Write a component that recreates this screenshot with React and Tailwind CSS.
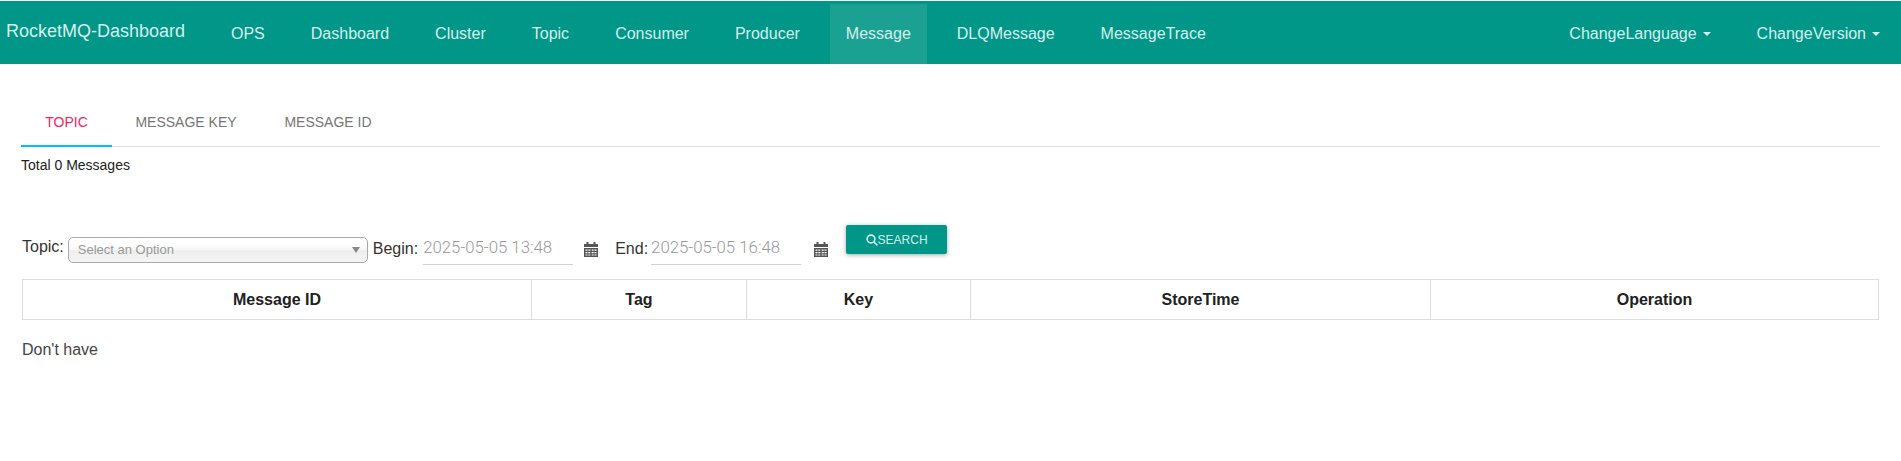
import React from 'react';

const navItems = [
  { label: 'OPS' },
  { label: 'Dashboard' },
  { label: 'Cluster' },
  { label: 'Topic' },
  { label: 'Consumer' },
  { label: 'Producer' },
  { label: 'Message', active: true },
  { label: 'DLQMessage' },
  { label: 'MessageTrace' },
];

const columns = [
  { label: 'Message ID', w: 'w-[509px]' },
  { label: 'Tag', w: 'w-[215px]' },
  { label: 'Key', w: 'w-[224px]' },
  { label: 'StoreTime', w: 'w-[460px]' },
  { label: 'Operation', w: 'flex-1' },
];

const CalendarIcon = () => (
  <svg width="14" height="15" viewBox="0 0 14 15" className="text-[#555]" fill="currentColor">
    <rect x="2.5" y="0" width="2" height="3" />
    <rect x="9.5" y="0" width="2" height="3" />
    <path d="M0 2h14v3H0z" />
    <path fillRule="evenodd" d="M0 6h14v9H0z M1.5 7.5v1.2h2v-1.2z M4.3 7.5v1.2h2v-1.2z M7.7 7.5v1.2h2v-1.2z M10.5 7.5v1.2h2v-1.2z M1.5 10v1.2h2V10z M4.3 10v1.2h2V10z M7.7 10v1.2h2V10z M10.5 10v1.2h2V10z M1.5 12.4v1.2h2v-1.2z M4.3 12.4v1.2h2v-1.2z M7.7 12.4v1.2h2v-1.2z M10.5 12.4v1.2h2v-1.2z" />
  </svg>
);

const Caret = () => (
  <span className="ml-[6px] inline-block border-x-[4px] border-t-[4px] border-x-transparent border-t-[#d6efec]" />
);

const App = () => {
  return (
    <div className="min-h-[461px] bg-white font-['Liberation_Sans',Arial,sans-serif] text-[#333]">
      {/* navbar */}
      <div className="mt-px flex h-[63px] items-end bg-[#009688] text-[16px] text-[#d6efec]">
        <div className="mb-[23px] w-[208px] pl-[6px] text-[18px] leading-[20px]">RocketMQ-Dashboard</div>
        <div className="flex h-[60px] items-stretch">
          {navItems.map(item => (
            <div
              key={item.label}
              className={`mx-[7px] flex items-center justify-center px-[16px] ${item.active ? 'bg-[#1ba192]' : ''}`}
            >
              {item.label}
            </div>
          ))}
        </div>
        <div className="ml-auto mb-[20px] flex">
          <div className="flex items-center leading-[20px]">ChangeLanguage<Caret /></div>
          <div className="ml-[46px] mr-[21px] flex items-center leading-[20px]">ChangeVersion<Caret /></div>
        </div>
      </div>

      {/* tabs */}
      <div className="mx-[21px] mt-[34px] flex h-[49px] border-b border-[#e0e0e0] text-[14px]">
        <div className="flex w-[91px] items-center justify-center border-b-2 border-[#00bfff] pt-px -mb-px text-[#f5245f]">TOPIC</div>
        <div className="flex w-[148px] items-center justify-center text-[#757575]">MESSAGE KEY</div>
        <div className="flex w-[136px] items-center justify-center text-[#757575]">MESSAGE ID</div>
      </div>
      <div className="mx-[21px] mt-[8px] text-[14px] leading-[20px] text-[#212121]">Total 0 Messages</div>

      {/* search form */}
      <div className="mx-[22px] mt-[50px] flex h-[40px] items-start text-[16px]">
        <span className="mt-[12px] leading-[20px] text-[#333]">Topic:</span>
        <div className="ml-[4px] mt-[12px] flex h-[26px] w-[300px] items-center justify-between rounded-[5px] border border-[#aaa] bg-[linear-gradient(#fff_20%,#f6f6f6_50%,#eee_52%,#f4f4f4_100%)] pl-[9px] pr-[7px] text-[13px] text-[#999]">
          <span>Select an Option</span>
          <span className="inline-block border-x-[4px] border-t-[6px] border-x-transparent border-t-[#888]" />
        </div>
        <span className="ml-[5px] mt-[14px] leading-[20px] text-[#333]">Begin:</span>
        <div className="ml-[5px] mt-[8px] h-[32px] w-[150px] border-b border-[#d2d2d2] pt-[4px] font-['Roboto',sans-serif] text-[16.8px] font-light leading-[20px] text-[#999]">2025-05-05 13:48</div>
        <div className="ml-[11px] mt-[17px]"><CalendarIcon /></div>
        <span className="ml-[17px] mt-[14px] leading-[20px] text-[#333]">End:</span>
        <div className="ml-[3px] mt-[8px] h-[32px] w-[150px] border-b border-[#d2d2d2] pt-[4px] font-['Roboto',sans-serif] text-[16.8px] font-light leading-[20px] text-[#999]">2025-05-05 16:48</div>
        <div className="ml-[13px] mt-[17px]"><CalendarIcon /></div>
        <button className="ml-[18px] flex h-[29px] w-[101px] items-center justify-center rounded-[2px] bg-[#009688] text-[12px] text-[#d6efec] shadow-[0_1px_4px_rgba(0,0,0,0.35)]">
          <svg width="12" height="12" viewBox="0 0 12 12" fill="none" stroke="currentColor" strokeWidth="1.6">
            <circle cx="5" cy="5" r="3.9" />
            <path d="M8 8l3.4 3.4" />
          </svg>
          SEARCH
        </button>
      </div>

      {/* table */}
      <div className="mx-[22px] mt-[14px] flex h-[41px] border border-[#ddd] text-[16px] font-bold text-[#212121]">
        {columns.map((col, i) => (
          <div
            key={col.label}
            className={`flex items-center justify-center ${col.w} ${i < columns.length - 1 ? 'border-r border-[#ddd]' : ''}`}
          >
            {col.label}
          </div>
        ))}
      </div>
      <div className="mx-[22px] mt-[20px] text-[16px] leading-[20px] text-[#444]">Don't have</div>
    </div>
  );
};

export default App;
